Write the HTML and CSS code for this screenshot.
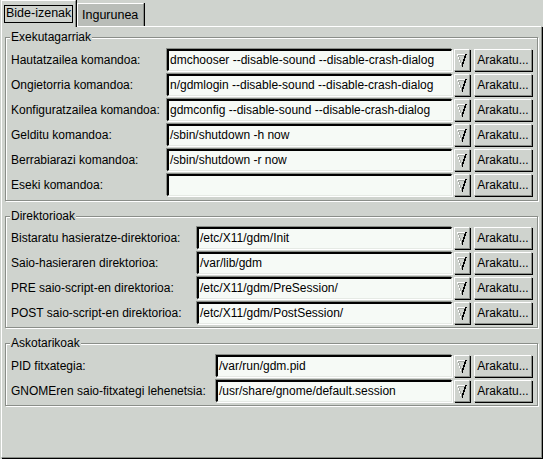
FILE: index.html
```html
<!DOCTYPE html>
<html>
<head>
<meta charset="utf-8">
<link rel="stylesheet" href="styles.css">
</head>
<body>
<div class="tabs">
  <div class="tab active"><span class="focus">Bide-izenak</span></div>
  <div class="tab">Ingurunea</div>
</div>
<div class="panel">
  <div class="frame f1">
    <span class="legend">Exekutagarriak</span>
    <div class="grid">
      <label>Hautatzailea komandoa:</label><div class="entry">dmchooser --disable-sound --disable-crash-dialog</div><div class="drop"><svg width="10" height="13" viewBox="0 0 10 13"><path d="M0 0.5H9" stroke="#fff"/><path d="M1 1.5H8" stroke="#a4a8a3"/><path d="M0.5 0.5L4.5 12.5" stroke="#fff"/><path d="M1.5 1.5L5 11.5" stroke="#a4a8a3"/><path d="M9 0L5 12.5" stroke="#000" stroke-width="1.5"/></svg></div><div class="btn">Arakatu...</div>
      <label>Ongietorria komandoa:</label><div class="entry">n/gdmlogin --disable-sound --disable-crash-dialog</div><div class="drop"><svg width="10" height="13" viewBox="0 0 10 13"><path d="M0 0.5H9" stroke="#fff"/><path d="M1 1.5H8" stroke="#a4a8a3"/><path d="M0.5 0.5L4.5 12.5" stroke="#fff"/><path d="M1.5 1.5L5 11.5" stroke="#a4a8a3"/><path d="M9 0L5 12.5" stroke="#000" stroke-width="1.5"/></svg></div><div class="btn">Arakatu...</div>
      <label>Konfiguratzailea komandoa:</label><div class="entry">gdmconfig --disable-sound --disable-crash-dialog</div><div class="drop"><svg width="10" height="13" viewBox="0 0 10 13"><path d="M0 0.5H9" stroke="#fff"/><path d="M1 1.5H8" stroke="#a4a8a3"/><path d="M0.5 0.5L4.5 12.5" stroke="#fff"/><path d="M1.5 1.5L5 11.5" stroke="#a4a8a3"/><path d="M9 0L5 12.5" stroke="#000" stroke-width="1.5"/></svg></div><div class="btn">Arakatu...</div>
      <label>Gelditu komandoa:</label><div class="entry">/sbin/shutdown -h now</div><div class="drop"><svg width="10" height="13" viewBox="0 0 10 13"><path d="M0 0.5H9" stroke="#fff"/><path d="M1 1.5H8" stroke="#a4a8a3"/><path d="M0.5 0.5L4.5 12.5" stroke="#fff"/><path d="M1.5 1.5L5 11.5" stroke="#a4a8a3"/><path d="M9 0L5 12.5" stroke="#000" stroke-width="1.5"/></svg></div><div class="btn">Arakatu...</div>
      <label>Berrabiarazi komandoa:</label><div class="entry">/sbin/shutdown -r now</div><div class="drop"><svg width="10" height="13" viewBox="0 0 10 13"><path d="M0 0.5H9" stroke="#fff"/><path d="M1 1.5H8" stroke="#a4a8a3"/><path d="M0.5 0.5L4.5 12.5" stroke="#fff"/><path d="M1.5 1.5L5 11.5" stroke="#a4a8a3"/><path d="M9 0L5 12.5" stroke="#000" stroke-width="1.5"/></svg></div><div class="btn">Arakatu...</div>
      <label>Eseki komandoa:</label><div class="entry"></div><div class="drop"><svg width="10" height="13" viewBox="0 0 10 13"><path d="M0 0.5H9" stroke="#fff"/><path d="M1 1.5H8" stroke="#a4a8a3"/><path d="M0.5 0.5L4.5 12.5" stroke="#fff"/><path d="M1.5 1.5L5 11.5" stroke="#a4a8a3"/><path d="M9 0L5 12.5" stroke="#000" stroke-width="1.5"/></svg></div><div class="btn">Arakatu...</div>
    </div>
  </div>
  <div class="frame f2">
    <span class="legend">Direktorioak</span>
    <div class="grid">
      <label>Bistaratu hasieratze-direktorioa:</label><div class="entry">/etc/X11/gdm/Init</div><div class="drop"><svg width="10" height="13" viewBox="0 0 10 13"><path d="M0 0.5H9" stroke="#fff"/><path d="M1 1.5H8" stroke="#a4a8a3"/><path d="M0.5 0.5L4.5 12.5" stroke="#fff"/><path d="M1.5 1.5L5 11.5" stroke="#a4a8a3"/><path d="M9 0L5 12.5" stroke="#000" stroke-width="1.5"/></svg></div><div class="btn">Arakatu...</div>
      <label>Saio-hasieraren direktorioa:</label><div class="entry">/var/lib/gdm</div><div class="drop"><svg width="10" height="13" viewBox="0 0 10 13"><path d="M0 0.5H9" stroke="#fff"/><path d="M1 1.5H8" stroke="#a4a8a3"/><path d="M0.5 0.5L4.5 12.5" stroke="#fff"/><path d="M1.5 1.5L5 11.5" stroke="#a4a8a3"/><path d="M9 0L5 12.5" stroke="#000" stroke-width="1.5"/></svg></div><div class="btn">Arakatu...</div>
      <label>PRE saio-script-en direktorioa:</label><div class="entry">/etc/X11/gdm/PreSession/</div><div class="drop"><svg width="10" height="13" viewBox="0 0 10 13"><path d="M0 0.5H9" stroke="#fff"/><path d="M1 1.5H8" stroke="#a4a8a3"/><path d="M0.5 0.5L4.5 12.5" stroke="#fff"/><path d="M1.5 1.5L5 11.5" stroke="#a4a8a3"/><path d="M9 0L5 12.5" stroke="#000" stroke-width="1.5"/></svg></div><div class="btn">Arakatu...</div>
      <label>POST saio-script-en direktorioa:</label><div class="entry">/etc/X11/gdm/PostSession/</div><div class="drop"><svg width="10" height="13" viewBox="0 0 10 13"><path d="M0 0.5H9" stroke="#fff"/><path d="M1 1.5H8" stroke="#a4a8a3"/><path d="M0.5 0.5L4.5 12.5" stroke="#fff"/><path d="M1.5 1.5L5 11.5" stroke="#a4a8a3"/><path d="M9 0L5 12.5" stroke="#000" stroke-width="1.5"/></svg></div><div class="btn">Arakatu...</div>
    </div>
  </div>
  <div class="frame f3">
    <span class="legend">Askotarikoak</span>
    <div class="grid">
      <label>PID fitxategia:</label><div class="entry">/var/run/gdm.pid</div><div class="drop"><svg width="10" height="13" viewBox="0 0 10 13"><path d="M0 0.5H9" stroke="#fff"/><path d="M1 1.5H8" stroke="#a4a8a3"/><path d="M0.5 0.5L4.5 12.5" stroke="#fff"/><path d="M1.5 1.5L5 11.5" stroke="#a4a8a3"/><path d="M9 0L5 12.5" stroke="#000" stroke-width="1.5"/></svg></div><div class="btn">Arakatu...</div>
      <label>GNOMEren saio-fitxategi lehenetsia:</label><div class="entry">/usr/share/gnome/default.session</div><div class="drop"><svg width="10" height="13" viewBox="0 0 10 13"><path d="M0 0.5H9" stroke="#fff"/><path d="M1 1.5H8" stroke="#a4a8a3"/><path d="M0.5 0.5L4.5 12.5" stroke="#fff"/><path d="M1.5 1.5L5 11.5" stroke="#a4a8a3"/><path d="M9 0L5 12.5" stroke="#000" stroke-width="1.5"/></svg></div><div class="btn">Arakatu...</div>
    </div>
  </div>
</div>
</body>
</html>
```
FILE: styles.css
```css
html, body {
  margin: 0;
  padding: 0;
  background: #cfd3ce;
  width: 543px;
  height: 459px;
  overflow: hidden;
  font-family: "Liberation Sans", Arial, sans-serif;
  font-size: 12px;
  color: #000;
}
.tabs {
  display: flex;
  align-items: flex-end;
  height: 26px;
  padding-left: 1px;
}
.tab {
  box-sizing: border-box;
  height: 23px;
  padding: 0 4px;
  display: flex;
  align-items: center;
  background: #b9bdb8;
  border-left: 1px solid #fff;
  border-top: 1px solid #fff;
  border-right: 1px solid #8a8e89;
  box-shadow: 1px 0 0 #000;
  margin-right: 1px;
  width: 67px;
  font-size: 12.5px;
}
.tab.active {
  background: #cfd3ce;
  width: 75px;
  padding: 0 1px 1px 2px;
  position: relative;
  z-index: 2;
  margin-bottom: -1px;
  height: 27px;
}
.focus {
  border: 1px solid #000;
  padding: 1px 1px 2px 1px;
  line-height: 13px;
}
.panel {
  box-sizing: border-box;
  margin-left: 1px;
  width: 541px;
  height: 432px;
  border-top: 1px solid #fff;
  border-left: 1px solid #fff;
  border-right: 1px solid #8a8e89;
  border-bottom: 1px solid #8a8e89;
  box-shadow: 1px 1px 0 #000;
  padding: 10px 1px 0 3px;
}
.frame {
  position: relative;
  width: 533px;
  box-sizing: border-box;
  border: 1px solid #8a8e89;
  box-shadow: inset 1px 1px 0 #fff, 1px 1px 0 #fff;
  padding: 10px 5px 3px 5px;
  margin-bottom: 15px;
}
.f1 { padding-top: 11px; padding-bottom: 4px; }
.f3 { padding-top: 11px; }
.legend {
  position: absolute;
  top: -8px;
  left: 4px;
  padding: 0 1px;
  background: #cfd3ce;
  line-height: 14px;
}
.grid {
  display: grid;
  grid-auto-rows: 22px;
  row-gap: 3px;
  column-gap: 2px;
  align-items: center;
}
.f1 .grid { grid-template-columns: 154px 1fr 16px 60px; }
.f2 .grid { grid-template-columns: 184px 1fr 16px 60px; }
.f3 .grid { grid-template-columns: 203px 1fr 16px 60px; }
label {
  white-space: nowrap;
}
.entry {
  box-sizing: border-box;
  height: 22px;
  background: #f6faf6;
  border-top: 2px solid #000;
  border-left: 2px solid #000;
  border-right: 1px solid #e6eae5;
  border-bottom: 1px solid #e6eae5;
  box-shadow: -1px -1px 0 #8a8e89, 1px 1px 0 #fff;
  padding: 0 0 0 1px;
  line-height: 18px;
  white-space: nowrap;
  overflow: hidden;
}
.drop, .btn {
  box-sizing: border-box;
  height: 22px;
  background: #cfd3ce;
  border-top: 1px solid #fff;
  border-left: 1px solid #fff;
  border-right: 1px solid #8a8e89;
  border-bottom: 1px solid #8a8e89;
  box-shadow: 1px 1px 0 #000;
  display: flex;
  align-items: center;
  justify-content: center;
}
.drop svg { display: block; shape-rendering: crispEdges; }
.btn {
  margin-left: 2px;
  width: 58px;
  white-space: nowrap;
}
```
